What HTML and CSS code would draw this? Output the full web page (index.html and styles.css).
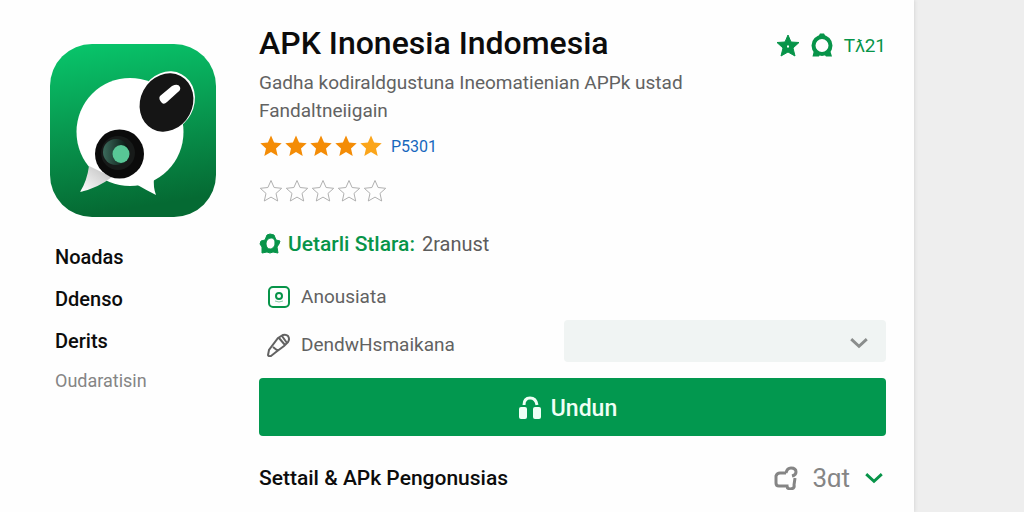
FILE: index.html
```
<!DOCTYPE html>
<html lang="id">
<head>
  <meta charset="UTF-8" />
  <meta name="viewport" content="width=device-width, initial-scale=1" />
  <title>APK Inonesia Indomesia</title>
  <link rel="stylesheet" href="styles.css">
</head>
<body>
  <svg class="defs" aria-hidden="true">
    <symbol id="star" viewBox="0 0 24 24">
      <path d="M12 1.5l3.1 7 7.6.8-5.7 5.1 1.7 7.6-6.7-3.9L5.300 22 7 14.400 1.300 9.300l7.600-.8z"/>
    </symbol>
    <symbol id="chevron" viewBox="0 0 18 18">
      <path d="M2 5.500l7 6.500 7-6.500" fill="none" stroke="currentColor" stroke-width="2.600"/>
    </symbol>
  </svg>

  <div class="card">
    <aside class="side">
      <svg class="app-icon" viewBox="0 0 166 173" role="img" aria-label="APK">
        <defs>
          <linearGradient id="bg" x1="0" y1="0" x2="0.150" y2="1">
            <stop offset="0" stop-color="#08c76c"/>
            <stop offset="0.500" stop-color="#089950"/>
            <stop offset="1" stop-color="#056a33"/>
          </linearGradient>
          <linearGradient id="tail" x1="0" y1="1" x2="1" y2="0">
            <stop offset="0" stop-color="#fff"/>
            <stop offset="1" stop-color="#bbb"/>
          </linearGradient>
          <linearGradient id="lens" x1="0" y1="0" x2="1" y2="0">
            <stop offset="0" stop-color="#3c6b5c"/>
            <stop offset="1" stop-color="#06110d"/>
          </linearGradient>
        </defs>
        <rect width="166" height="173" rx="42" fill="url(#bg)"/>
        <ellipse cx="80" cy="88" rx="53.500" ry="54" fill="#fff"/>
        <path d="M84 139q12 7 22 12-3-8-2-17z" fill="#fff"/>
        <path d="M39 122q-2 15-9 26 18-4 32-15z" fill="url(#tail)"/>
        <ellipse cx="117" cy="57.500" rx="27" ry="31" transform="rotate(28 117 57.500)" fill="#fff"/>
        <ellipse cx="116.500" cy="58.500" rx="26" ry="30" transform="rotate(28 116.500 58.500)" fill="#151515"/>
        <path d="M110 52L122 42q6-3 8 1 1 3-2 5L117 58q-3 3-5 1-4-4-2-7z" fill="#fff"/>
        <circle cx="69.500" cy="110" r="24.500" fill="#0b0b0b"/>
        <circle cx="68" cy="109" r="17" fill="#171a19"/>
        <circle cx="66" cy="108" r="13" fill="url(#lens)"/>
        <ellipse cx="71" cy="110" rx="8.500" ry="9" fill="#58c796"/>
      </svg>
      <nav class="side-nav">
        <a href="#">Noadas</a>
        <a href="#">Ddenso</a>
        <a href="#">Derits</a>
        <a href="#" class="muted">Oudaratisin</a>
      </nav>
    </aside>

    <main class="main">
      <header class="head">
        <h1>APK Inonesia Indomesia</h1>
        <div class="head-stats">
          <svg class="icon" viewBox="0 0 24 24">
            <path fill-rule="evenodd" stroke="currentColor" stroke-linejoin="round" d="M12 2l3 7 8 .500-6 5.500 2 8-7-4-7 4 2-8L1 9.500l8-.500zM10.500 12v3h3v-3z"/>
          </svg>
          <svg class="icon" viewBox="0 0 24 24">
            <ellipse cx="12" cy="12.500" rx="8.500" ry="8.500" fill="none" stroke="currentColor" stroke-width="4"/>
            <path d="M8 4l2-3.500h4L16 4zM4 17l-1.500 6.500H9L10 21zM20 17l2 6.500h-6L14 21z"/>
          </svg>
          <span>Tƛ21</span>
        </div>
      </header>
      <p class="desc">Gadha kodiraldgustuna Ineomatienian APPk ustad Fandaltneiigain</p>

      <div class="rating">
        <svg><use href="#star"/></svg>
        <svg><use href="#star"/></svg>
        <svg><use href="#star"/></svg>
        <svg><use href="#star"/></svg>
        <svg class="light"><use href="#star"/></svg>
        <a href="#">P5301</a>
      </div>
      <div class="rating empty">
        <svg><use href="#star"/></svg>
        <svg><use href="#star"/></svg>
        <svg><use href="#star"/></svg>
        <svg><use href="#star"/></svg>
        <svg><use href="#star"/></svg>
      </div>

      <p class="status">
        <svg viewBox="0 0 22 22">
          <path fill-rule="evenodd" stroke="currentColor" stroke-linejoin="round" d="M8 2l3-1 4 1 2 5 4 1-1 3-2 3 1 6-5-1-3 1-3-1-5 1v-6l-2-3 1-3 4-1zM12 5C9 5 7 8 7 11s2 5 4 5 5-2 5-6-2-5-4-5z"/>
        </svg>
        <strong>Uetarli Stlara:</strong>
        <span>2ranust</span>
      </p>

      <div class="option">
        <svg viewBox="0 0 24 24" class="green">
          <rect x="2" y="2" width="20" height="20" rx="4"/>
          <circle cx="12" cy="11" r="3"/>
          <path d="M8 16q4 2 8 0" stroke-width="1" opacity="0.500"/>
        </svg>
        <span>Anousiata</span>
      </div>
      <div class="option with-select">
        <label for="version">
          <svg viewBox="0 0 24 24">
            <path d="M11 5l5-3q3-1 5 1 2 3 0 6l-4 4-8 6-5 4q-2 1-3-1l1-5zM12 5l6 7M15 3l5 7M6 14l5 4"/>
          </svg>
          <span>DendwHsmaikana</span>
        </label>
        <div class="select-wrap">
          <select id="version">
            <option></option>
          </select>
          <svg class="chevron"><use href="#chevron"/></svg>
        </div>
      </div>

      <button type="button" class="download">
        <svg viewBox="0 0 24 24">
          <path d="M6 9q0-7 6-7t7 7" fill="none" stroke="currentColor" stroke-width="3"/>
          <rect x="1" y="11" width="8" height="12" rx="2"/>
          <rect x="15" y="11" width="8" height="12" rx="2"/>
        </svg>
        Undun
      </button>

      <footer class="foot">
        <h2>Settail &amp; APk Pengonusias</h2>
        <div class="foot-actions">
          <svg viewBox="0 0 24 24" class="share">
            <path d="M12 7H6q-3 0-4 3v7q0 3 3 3h8q0 3 4 3 4-1 3-4l1-7M12 7q1-5 5-5 5 0 5 4 0 3-4 4"/>
          </svg>
          <span>3ɑt</span>
          <svg class="chevron"><use href="#chevron"/></svg>
        </div>
      </footer>
    </main>
  </div>
</body>
</html>
```
FILE: styles.css
```
* {
  box-sizing: border-box;
}
body {
  margin: 0;
  font-family: Roboto, "Liberation Sans", sans-serif;
  background: #eeeeee;
  color: #0c0c0c;
}
h1, h2, p {
  margin: 0;
  font-weight: 500;
}
a {
  color: inherit;
  text-decoration: none;
}
svg {
  display: block;
  flex: none;
  fill: currentColor;
}
.defs {
  position: absolute;
  width: 0;
  height: 0;
}
.card {
  display: grid;
  grid-template-columns: 166px 1fr;
  gap: 43px;
  min-height: 100vh;
  margin-right: 110px;
  padding: 23px 28px 20px 50px;
  background: #fefefe;
  box-shadow: 0 0 4px #cccccc;
}

/* left column */
.side {
  padding-top: 21px;
}
.app-icon {
  width: 100%;
}
.side-nav {
  display: flex;
  flex-direction: column;
  gap: 18px;
  padding: 28px 0 0 5px;
  font-size: 20px;
  line-height: 24px;
  font-weight: 500;
}
.side-nav .muted {
  margin-top: -2px;
  font-size: 18px;
  font-weight: 400;
  color: #858585;
}

/* title */
.head {
  display: flex;
  justify-content: space-between;
  align-items: center;
}
h1 {
  font-size: 32px;
  line-height: 40px;
}
.head-stats {
  display: flex;
  align-items: center;
  gap: 10px;
  padding-top: 4px;
  font-size: 19px;
  color: #079449;
}
.head-stats .icon {
  width: 24px;
  height: 24px;
}
.desc {
  max-width: 450px;
  margin-top: 6px;
  font-size: 19px;
  line-height: 28px;
  font-weight: 400;
  color: #626262;
}

/* stars */
.rating {
  display: flex;
  align-items: center;
  gap: 1px;
  height: 24px;
  margin-top: 9px;
  color: #f48c06;
}
.rating svg {
  width: 24px;
  height: 24px;
}
.rating .light {
  color: #fba51a;
}
.rating a {
  margin-left: 7px;
  font-size: 16px;
  color: #1767bd;
}
.rating.empty {
  gap: 2px;
  margin-top: 21px;
}
.empty svg {
  fill: none;
  stroke: #b0b0b0;
  stroke-width: 1;
}

.status {
  display: flex;
  align-items: center;
  gap: 7px;
  margin-top: 29px;
  font-size: 20px;
  line-height: 24px;
  color: #5c5c5c;
}
.status svg {
  width: 22px;
  height: 22px;
  color: #079449;
}
.status strong {
  font-size: 21px;
  font-weight: 500;
  color: #079449;
}
.status span {
  font-weight: 400;
}

/* options */
.option {
  display: flex;
  align-items: center;
  gap: 10px;
  margin-top: 29px;
  padding-left: 8px;
  font-size: 19px;
  line-height: 24px;
  color: #626262;
}
.option svg {
  width: 24px;
  height: 24px;
  fill: none;
  stroke: currentColor;
  stroke-width: 2;
}
.option .green {
  color: #079449;
}
.with-select {
  justify-content: space-between;
  margin-top: 11px;
}
.with-select label {
  display: flex;
  align-items: center;
  gap: 10px;
  padding-top: 8px;
}
.select-wrap {
  position: relative;
  width: 52%;
}
select {
  display: block;
  width: 100%;
  height: 42px;
  border: none;
  border-radius: 4px;
  background: #f0f4f3;
  appearance: none;
}
.select-wrap .chevron {
  position: absolute;
  top: 13px;
  right: 17px;
  width: 20px;
  height: 20px;
  color: #8a8d8c;
  stroke: none;
  pointer-events: none;
}

.download {
  display: flex;
  justify-content: center;
  align-items: center;
  gap: 9px;
  width: 100%;
  height: 58px;
  margin-top: 16px;
  padding: 2px 16px 0 6px;
  border: none;
  border-radius: 4px;
  background: #02984f;
  color: #effff5;
  font-family: inherit;
  font-size: 23px;
  font-weight: 500;
  cursor: pointer;
}
.download svg {
  width: 24px;
  height: 24px;
}

.foot {
  display: flex;
  justify-content: space-between;
  align-items: center;
  margin-top: 28px;
}
h2 {
  font-size: 21px;
  line-height: 28px;
}
.foot-actions {
  display: flex;
  align-items: center;
  gap: 14px;
  padding-right: 2px;
  font-size: 26px;
  line-height: 28px;
  color: #858585;
}
.foot-actions .share {
  width: 24px;
  height: 24px;
  fill: none;
  stroke: currentColor;
  stroke-width: 3;
}
.foot-actions .chevron {
  width: 20px;
  height: 20px;
  color: #079449;
}
```
